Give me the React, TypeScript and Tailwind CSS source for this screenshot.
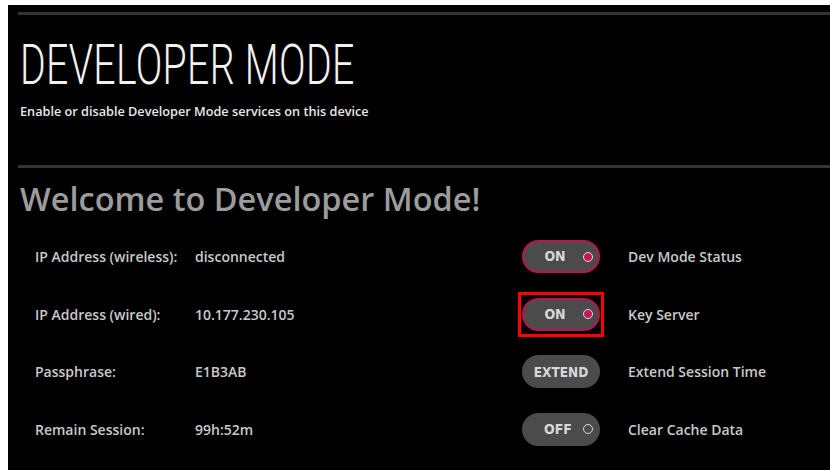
import React from "react";

const infoRows = [
  { label: "IP Address (wireless):", value: "disconnected" },
  { label: "IP Address (wired):", value: "10.177.230.105" },
  { label: "Passphrase:", value: "E1B3AB" },
  { label: "Remain Session:", value: "99h:52m" },
];

type Control = {
  text: string;
  label: string;
  kind: "on" | "off" | "button";
  focused?: boolean;
};

const controls: Control[] = [
  { text: "ON", label: "Dev Mode Status", kind: "on" },
  { text: "ON", label: "Key Server", kind: "on", focused: true },
  { text: "EXTEND", label: "Extend Session Time", kind: "button" },
  { text: "OFF", label: "Clear Cache Data", kind: "off" },
];

const bodyFont = { fontFamily: "'Open Sans', 'Noto Sans', sans-serif" };
const pillFont = { fontFamily: "'Liberation Sans Narrow', 'DejaVu Sans Condensed', sans-serif" };

function Pill({ c }: { c: Control }) {
  const border =
    c.kind === "on" ? "border-[#b8164e]" : "border-[#4b4b4b]";
  return (
    <div
      className={
        "flex h-[33px] w-[78px] items-center rounded-full border-2 bg-[#4b4b4b] " + border
      }
    >
      {c.kind === "button" ? (
        <span
          className="w-full text-center text-[13.5px] font-bold text-[#d8d8d8]"
          style={pillFont}
        >
          {c.text}
        </span>
      ) : (
        <>
          <span
            className="ml-[20px] w-[22px] text-center text-[14px] font-bold text-[#d8d8d8]"
            style={pillFont}
          >
            {c.text}
          </span>
          {c.kind === "on" ? (
            <span className="ml-[17px] h-[10px] w-[10px] rounded-full border-[1.5px] border-[#f2d0dc] bg-[#c2185b]" />
          ) : (
            <span className="ml-[17px] h-[10px] w-[10px] rounded-full border-[1.5px] border-[#d8d8d8] bg-[#4b4b4b]" />
          )}
        </>
      )}
    </div>
  );
}

export default function App() {
  return (
    <div className="h-[470px] w-[830px] overflow-hidden bg-white pl-[8px] pt-[5px]">
      <div className="flex h-[465px] w-[822px] flex-col bg-black">
        <div className="ml-[10px] mt-[7px] h-[3px] bg-[#343434]" />

        <div className="ml-[12px] mt-[26px] h-[48px] overflow-visible">
          <span
            className="inline-block origin-left scale-x-[0.7] whitespace-nowrap text-[56px] font-light leading-[48px] tracking-[0.5px] text-[#f2f2f2]"
            style={{ fontFamily: "Roboto, sans-serif" }}
          >
            DEVELOPER MODE
          </span>
        </div>
        <p
          className="ml-[12px] mt-[13px] text-[12.7px] font-semibold text-[#e8e8e8]"
          style={bodyFont}
        >
          Enable or disable Developer Mode services on this device
        </p>

        <div className="ml-[10px] mt-[44px] h-[3px] bg-[#343434]" />

        <h1
          className="ml-[12px] mt-[12px] text-[32.5px] font-semibold leading-[38px] text-[#9c9c9c]"
          style={bodyFont}
        >
          Welcome to Developer Mode!
        </h1>

        <div className="mt-[10px] flex flex-col" style={bodyFont}>
          {infoRows.map((row, i) => (
            <div key={row.label} className="flex h-[57.5px] items-center pl-[27px]">
              <span className="w-[160px] text-[14px] font-semibold text-[#c9c9c9]">
                {row.label}
              </span>
              <span className="w-[327px] text-[14px] font-semibold text-[#c9c9c9]">
                {row.value}
              </span>
              {controls[i].focused ? (
                <div className="-mx-[4px] -my-[6px] border-[3px] border-[#ff0000] px-[1px] py-[3px]">
                  <Pill c={controls[i]} />
                </div>
              ) : (
                <Pill c={controls[i]} />
              )}
              <span className="ml-[28px] text-[14px] font-semibold text-[#c9c9c9]">
                {controls[i].label}
              </span>
            </div>
          ))}
        </div>
      </div>
    </div>
  );
}
